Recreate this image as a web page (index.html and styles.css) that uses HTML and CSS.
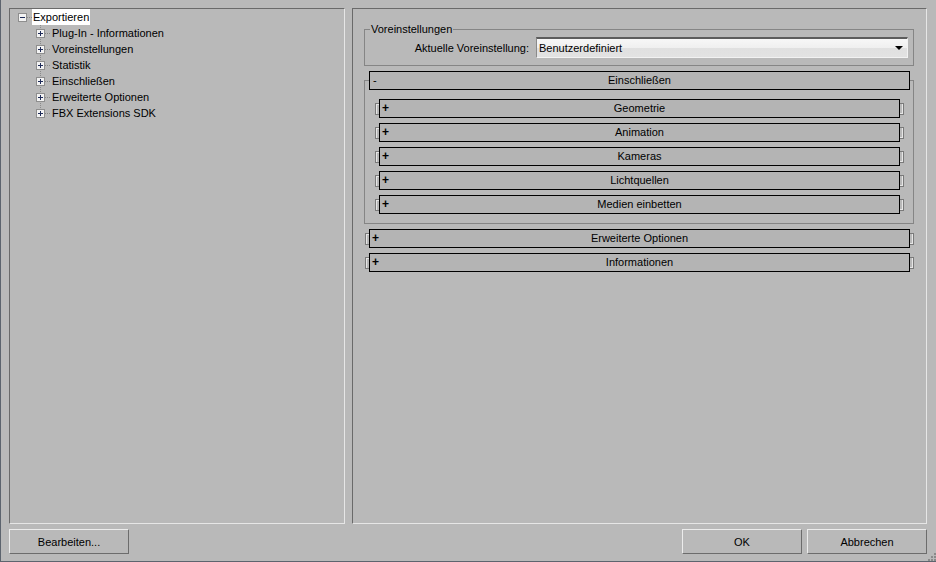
FILE: index.html
```html
<!DOCTYPE html>
<html lang="de">
  <head>
    <meta charset="UTF-8" />
    <title>FBX Export</title>
    <link rel="stylesheet" href="styles.css">
  </head>
  <body>
    <div class="window">
      <div class="main">
        <!-- left: navigation tree -->
        <div class="panel tree-panel">
          <div class="tree">
            <div class="tree-row root">
              <span class="indent"></span>
              <svg class="expander" viewBox="0 0 9 9"><rect x=".5" y=".5" width="8" height="8" fill="#f3f3f3" stroke="#8e8e8e"/><path d="M2 4.5h5" stroke="#1d2a58"/></svg>
              <span class="hdots"></span>
              <span class="tree-label selected">Exportieren</span>
            </div>
            <div class="tree-row child">
              <span class="indent"></span>
              <span class="branch"><svg class="expander" viewBox="0 0 9 9"><rect x=".5" y=".5" width="8" height="8" fill="#f3f3f3" stroke="#8e8e8e"/><path d="M2 4.5h5M4.5 2v5" stroke="#1d2a58"/></svg></span>
              <span class="hdots"></span>
              <span class="tree-label">Plug-In - Informationen</span>
            </div>
            <div class="tree-row child">
              <span class="indent"></span>
              <span class="branch"><svg class="expander" viewBox="0 0 9 9"><rect x=".5" y=".5" width="8" height="8" fill="#f3f3f3" stroke="#8e8e8e"/><path d="M2 4.5h5M4.5 2v5" stroke="#1d2a58"/></svg></span>
              <span class="hdots"></span>
              <span class="tree-label">Voreinstellungen</span>
            </div>
            <div class="tree-row child">
              <span class="indent"></span>
              <span class="branch"><svg class="expander" viewBox="0 0 9 9"><rect x=".5" y=".5" width="8" height="8" fill="#f3f3f3" stroke="#8e8e8e"/><path d="M2 4.5h5M4.5 2v5" stroke="#1d2a58"/></svg></span>
              <span class="hdots"></span>
              <span class="tree-label">Statistik</span>
            </div>
            <div class="tree-row child">
              <span class="indent"></span>
              <span class="branch"><svg class="expander" viewBox="0 0 9 9"><rect x=".5" y=".5" width="8" height="8" fill="#f3f3f3" stroke="#8e8e8e"/><path d="M2 4.5h5M4.5 2v5" stroke="#1d2a58"/></svg></span>
              <span class="hdots"></span>
              <span class="tree-label">Einschließen</span>
            </div>
            <div class="tree-row child">
              <span class="indent"></span>
              <span class="branch"><svg class="expander" viewBox="0 0 9 9"><rect x=".5" y=".5" width="8" height="8" fill="#f3f3f3" stroke="#8e8e8e"/><path d="M2 4.5h5M4.5 2v5" stroke="#1d2a58"/></svg></span>
              <span class="hdots"></span>
              <span class="tree-label">Erweiterte Optionen</span>
            </div>
            <div class="tree-row child">
              <span class="indent"></span>
              <span class="branch last"><svg class="expander" viewBox="0 0 9 9"><rect x=".5" y=".5" width="8" height="8" fill="#f3f3f3" stroke="#8e8e8e"/><path d="M2 4.5h5M4.5 2v5" stroke="#1d2a58"/></svg></span>
              <span class="hdots"></span>
              <span class="tree-label">FBX Extensions SDK</span>
            </div>
          </div>
        </div>

        <!-- right: settings -->
        <div class="panel settings-panel">
          <fieldset class="presets">
            <legend>Voreinstellungen</legend>
            <div class="preset-row">
              <label>Aktuelle Voreinstellung:</label>
              <div class="dropdown">
                <span>Benutzerdefiniert</span>
                <span class="arrow"></span>
              </div>
            </div>
          </fieldset>

          <div class="rollout-frame">
            <div class="rollout-head"><span class="sign">-</span><span class="title">Einschließen</span></div>
            <div class="rollout-list">
              <div class="rollout"><span class="bracket left"></span><div class="rollout-head"><span class="sign plus">+</span><span class="title">Geometrie</span></div><span class="bracket right"></span></div>
              <div class="rollout"><span class="bracket left"></span><div class="rollout-head"><span class="sign plus">+</span><span class="title">Animation</span></div><span class="bracket right"></span></div>
              <div class="rollout"><span class="bracket left"></span><div class="rollout-head"><span class="sign plus">+</span><span class="title">Kameras</span></div><span class="bracket right"></span></div>
              <div class="rollout"><span class="bracket left"></span><div class="rollout-head"><span class="sign plus">+</span><span class="title">Lichtquellen</span></div><span class="bracket right"></span></div>
              <div class="rollout"><span class="bracket left"></span><div class="rollout-head"><span class="sign plus">+</span><span class="title">Medien einbetten</span></div><span class="bracket right"></span></div>
            </div>
          </div>

          <div class="rollout-list outer">
            <div class="rollout"><span class="bracket left"></span><div class="rollout-head"><span class="sign plus">+</span><span class="title">Erweiterte Optionen</span></div><span class="bracket right"></span></div>
            <div class="rollout"><span class="bracket left"></span><div class="rollout-head"><span class="sign plus">+</span><span class="title">Informationen</span></div><span class="bracket right"></span></div>
          </div>
        </div>
      </div>

      <div class="footer">
        <button class="btn">Bearbeiten...</button>
        <span class="spacer"></span>
        <button class="btn">OK</button>
        <button class="btn">Abbrechen</button>
      </div>

      <svg class="grip" width="9" height="9" viewBox="0 0 9 9">
        <rect x="7" y="1" width="2" height="2" fill="#8a8a8a"/>
        <rect x="4" y="4" width="2" height="2" fill="#8a8a8a"/>
        <rect x="7" y="4" width="2" height="2" fill="#8a8a8a"/>
        <rect x="1" y="7" width="2" height="2" fill="#8a8a8a"/>
        <rect x="4" y="7" width="2" height="2" fill="#8a8a8a"/>
        <rect x="7" y="7" width="2" height="2" fill="#8a8a8a"/>
      </svg>
    </div>
  </body>
</html>
```

FILE: styles.css
```css
body {
  margin: 0;
  font-family: "Liberation Sans", Arial, sans-serif;
  font-size: 11px;
  color: #000;
  background: #b9b9b9;
}
.window {
  position: relative;
  display: flex;
  flex-direction: column;
  width: 936px;
  height: 562px;
  box-sizing: border-box;
  padding: 8px 9px 0 8px;
  border-left: 1px solid #5d646e;
  border-bottom: 1px solid #5d646e;
  background: #b9b9b9;
}
.main {
  display: flex;
  gap: 7px;
  height: 516px;
}
.panel {
  box-sizing: border-box;
  border-top: 1px solid #6a6a6a;
  border-left: 1px solid #6a6a6a;
  border-right: 1px solid #e6e6e6;
  border-bottom: 1px solid #e6e6e6;
}

/* tree */
.tree-panel {
  width: 336px;
}
.tree-row {
  display: flex;
  align-items: center;
  height: 16px;
}
.root .indent {
  width: 8px;
}
.child .indent {
  width: 26px;
}
.expander {
  width: 9px;
  height: 9px;
  flex: none;
}
.branch {
  display: flex;
  align-items: center;
  width: 9px;
  height: 16px;
  background: repeating-linear-gradient(to bottom, #8a8a8a 0 1px, transparent 1px 2px) no-repeat center top / 1px 100%;
}
.branch.last {
  background-size: 1px 8px;
}
.hdots {
  width: 5px;
  height: 1px;
  background: repeating-linear-gradient(to right, #8a8a8a 0 1px, transparent 1px 2px);
}
.child .hdots {
  width: 6px;
}
.tree-label {
  padding: 0 1px;
  line-height: 16px;
  white-space: nowrap;
}
.selected {
  background: #fff;
}

/* settings */
.settings-panel {
  flex: 1;
  padding: 14px 12px 0 11px;
}
.presets {
  margin: 0;
  padding: 0 5px 7px 5px;
  min-width: 0;
  border: 1px solid #858585;
}
.presets legend {
  padding: 0 1px;
  line-height: 13px;
}
.preset-row {
  display: flex;
  align-items: center;
  gap: 7px;
  margin-top: 1px;
}
.preset-row label {
  flex: 1;
  text-align: right;
}
.dropdown {
  display: flex;
  align-items: center;
  justify-content: space-between;
  box-sizing: border-box;
  width: 372px;
  height: 21px;
  padding: 0 4px 0 2px;
  border-top: 2px solid #5c5c5c;
  border-left: 1px solid #8a8a8a;
  border-right: 1px solid #f2f2f2;
  border-bottom: 1px solid #f2f2f2;
  background: linear-gradient(#f7f7f7, #efefef 50%, #e0e0e0 52%, #e2e2e2);
}
.arrow {
  width: 0;
  height: 0;
  border-left: 4px solid transparent;
  border-right: 4px solid transparent;
  border-top: 4px solid #000;
}

/* rollouts */
.rollout-frame {
  margin-top: 14px;
  padding: 0 3px 9px 4px;
  border: 1px solid #858585;
}
.rollout-frame > .rollout-head {
  margin-top: -10px;
}
.rollout-head {
  flex: 1;
  display: grid;
  grid-template-columns: 12px 1fr 12px;
  align-items: center;
  box-sizing: border-box;
  height: 19px;
  line-height: 17px;
  border: 1px solid #000;
  background: #b4b4b4;
}
.sign {
  padding-left: 3px;
}
.sign.plus {
  padding-left: 2px;
  font-weight: bold;
  font-size: 12px;
}
.title {
  text-align: center;
}
.rollout-list {
  display: flex;
  flex-direction: column;
  gap: 5px;
  margin: 9px 6px 0 6px;
}
.rollout-list.outer {
  margin: 5px 0 0 1px;
}
.rollout {
  display: flex;
  align-items: center;
}
.bracket {
  width: 4px;
  height: 12px;
  box-sizing: border-box;
  border: 1px solid #7a7a7a;
}
.bracket.left {
  border-right: none;
  box-shadow: inset 1px 1px 0 #e6e6e6;
}
.bracket.right {
  border-left: none;
  box-shadow: inset -1px -1px 0 #e6e6e6;
}

/* footer */
.footer {
  display: flex;
  gap: 5px;
  margin-top: 5px;
}
.spacer {
  flex: 1;
}
.btn {
  width: 120px;
  height: 25px;
  padding: 0;
  font: inherit;
  color: #000;
  background: #b9b9b9;
  border-top: 1px solid #ececec;
  border-left: 1px solid #ececec;
  border-right: 1px solid #6c6c6c;
  border-bottom: 1px solid #6c6c6c;
}
.grip {
  position: absolute;
  right: 0;
  bottom: 0;
}
```
